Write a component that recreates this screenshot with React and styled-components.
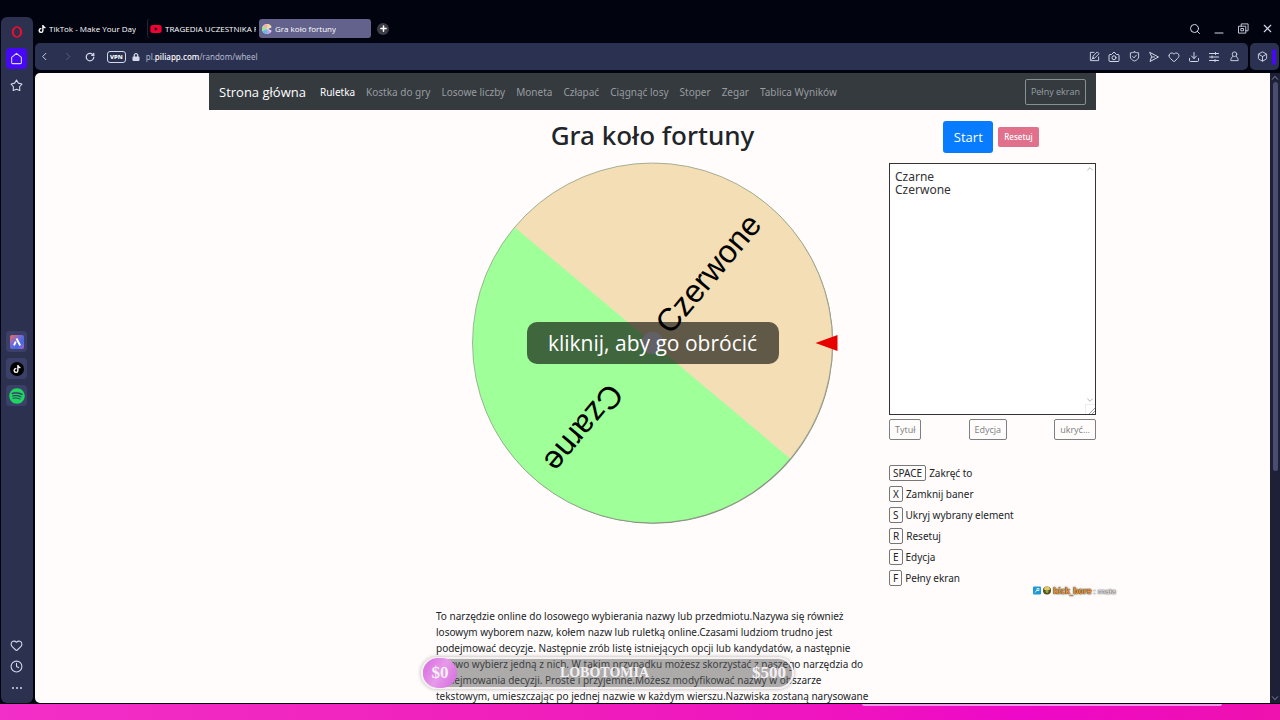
import { useState } from 'react';
import styled, { createGlobalStyle } from 'styled-components';
import { Box, Clock, Download, Heart, Plus, RotateCw, Search, X } from 'lucide-react';
import { FaLock, FaSpotify, FaTiktok, FaYoutube } from 'react-icons/fa';


const navLinks = [
  'Kostka do gry', 'Losowe liczby', 'Moneta', 'Człapać', 'Ciągnąć losy', 'Stoper', 'Zegar', 'Tablica Wyników',
];

const shortcuts = [
  { key: 'SPACE', label: 'Zakręć to' },
  { key: 'X', label: 'Zamknij baner' },
  { key: 'S', label: 'Ukryj wybrany element' },
  { key: 'R', label: 'Resetuj' },
  { key: 'E', label: 'Edycja' },
  { key: 'F', label: 'Pełny ekran' },
];

const Icon = ({ size = 12, children }) => (
  <svg width={size} height={size} viewBox='0 0 24 24' fill='none' stroke='currentColor' strokeWidth='2' strokeLinecap='round' strokeLinejoin='round'>
    {children}
  </svg>
);

const Sidebar = () => (
  <StyledSidebar>
    <SideGroup>
      <SideButton aria-label='Opera' $color='#e8102c'>
        <svg width='12' height='14' viewBox='0 0 12 14'>
          <path fillRule='evenodd' fill='currentColor' d='M6 1.300c3 0 5.200 2.600 5.200 5.700S9 12.700 6 12.700.8 10.100.8 7 3 1.300 6 1.300zM6 2.700C4.300 2.700 3 4.600 3 7S4.300 11.300 6 11.300 9 9.400 9 7 7.700 2.700 6 2.700z' />
        </svg>
      </SideButton>
      <SideButton aria-label='Strona startowa' $bg='#4708f5'>
        <Icon size={13}><path d='M3 10 12 2.500 21 10v9.500a2 2 0 0 1-2 2H5a2 2 0 0 1-2-2z' /></Icon>
      </SideButton>
      <SideButton aria-label='Zakładki'>
        <Icon size={13}><path d='M12 2 15.400 7.600 22 9.300 17.700 14.300 18.100 21.200 12 18.700 5.900 21.200 6.300 14.300 2 9.300 8.600 7.600z' /></Icon>
      </SideButton>
    </SideGroup>
    <Spacer $grow={35} />
    <SideGroup>
      <SideButton aria-label='Aria' $bg='#3a4068'>
        <svg width='14' height='14' viewBox='0 0 14 14'>
          <defs>
            <linearGradient id='aria' x1='0' y1='0' x2='1' y2='1'>
              <stop offset='0' stopColor='#f0704a' />
              <stop offset='0.4' stopColor='#7a68d8' />
              <stop offset='0.7' stopColor='#3f6ae8' />
              <stop offset='1' stopColor='#c05ad0' />
            </linearGradient>
          </defs>
          <rect width='14' height='14' rx='2' fill='url(#aria)' />
          <path d='M6.500 3.500l3.700 7M5.800 6.500 4 10.300' stroke='#fff' strokeWidth='1.900' fill='none' strokeLinejoin='round' />
        </svg>
      </SideButton>
      <SideButton aria-label='TikTok' $bg='#3a4068'>
        <RoundLogo><FaTiktok size={8} /></RoundLogo>
      </SideButton>
      <SideButton aria-label='Spotify' $bg='#3a4068' $color='#1ed760'>
        <FaSpotify size={16} />
      </SideButton>
    </SideGroup>
    <Spacer $grow={34} />
    <SideGroup $tight>
      <SideButton aria-label='Ulubione'><Heart size={13} /></SideButton>
      <SideButton aria-label='Historia'><Clock size={13} /></SideButton>
      <SideButton aria-label='Więcej'>
        <svg width='12' height='4' viewBox='0 0 12 4' fill='currentColor'>
          <circle cx='2' cy='2' r='1' /><circle cx='6' cy='2' r='1' /><circle cx='10' cy='2' r='1' />
        </svg>
      </SideButton>
    </SideGroup>
  </StyledSidebar>
);

const TabBar = () => (
  <StyledTabBar>
    <Tab><FaTiktok size={8} /><span>TikTok - Make Your Day</span></Tab>
    <Tab $divider><YoutubeMark><FaYoutube size={12} /></YoutubeMark><span>TRAGEDIA UCZESTNIKA P</span></Tab>
    <Tab $active>
      <svg width='10' height='10' viewBox='0 0 10 10'>
        <circle cx='5' cy='5' r='5' fill='#f3eef5' />
        <path d='M5 5V0a5 5 0 0 0-4 2z' fill='#f2a6c8' />
        <path d='M5 5 1 2a5 5 0 0 0-.6 5z' fill='#9ce87c' />
        <path d='M5 5 .4 7A5 5 0 0 0 5 10z' fill='#68b8f0' />
        <path d='M5 5V0a5 5 0 0 1 4 2z' fill='#f0dc80' />
        <path d='M5 5v5a5 5 0 0 0 4-2z' fill='#c89cf0' />
        <path d='M6 5l4-2v4z' fill='#6a6890' />
      </svg>
      <span>Gra koło fortuny</span>
    </Tab>
    <NewTab aria-label='Nowa karta'><Plus size={9} strokeWidth={4} /></NewTab>
    <WindowButtons>
      <IconButton aria-label='Szukaj'><Search size={12} /></IconButton>
      <IconButton aria-label='Minimalizuj'><Icon><path d='M4 20h16' /></Icon></IconButton>
      <IconButton aria-label='Przywróć'>
        <Icon size={11}><path d='M7 7V2h15v15h-5' /><path d='M2 7h15v15H2zM7 12h5v5H7z' /></Icon>
      </IconButton>
      <IconButton aria-label='Zamknij'><X size={13} /></IconButton>
    </WindowButtons>
  </StyledTabBar>
);

const AddressBar = () => (
  <BarRow>
    <Toolbar>
      <IconButton aria-label='Wstecz'><Icon size={11}><path d='m15 5-7 7 7 7' /></Icon></IconButton>
      <IconButton aria-label='Dalej' $dim><Icon size={11}><path d='m10 5 7 7-7 7' /></Icon></IconButton>
      <IconButton aria-label='Odśwież'><RotateCw size={10} strokeWidth={3} /></IconButton>
      <Address>
        <Vpn>VPN</Vpn>
        <FaLock size={8} />
        <Url href='#wheel'>pl.<b>piliapp.com</b>/random/wheel</Url>
      </Address>
      <Tools>
        <IconButton aria-label='Edytuj'>
          <Icon size={11}><path d='M11 3H3v18h18v-8M8 16l1-5 9-9 4 4-9 9zM6 18l4-4' /></Icon>
        </IconButton>
        <IconButton aria-label='Zrzut ekranu'>
          <Icon><path d='M2 9a2 2 0 0 1 2-2h3l5-5 5 5h3a2 2 0 0 1 2 2v10a2 2 0 0 1-2 2H4a2 2 0 0 1-2-2z' /><circle cx='12' cy='13.500' r='4' /></Icon>
        </IconButton>
        <IconButton aria-label='Ochrona'>
          <Icon size={11}><path d='M12 2c3 1.500 6 2 9 2v9c0 4-4 7-9 9-5-2-9-5-9-9V4c3 0 6-.5 9-2zM8 12l3 3 5-6' /></Icon>
        </IconButton>
        <IconButton aria-label='Wyślij'><Icon><path d='M4 3l17 9-17 9 3-9zM7 12h6' /></Icon></IconButton>
        <IconButton aria-label='Polub'><Heart size={12} /></IconButton>
        <IconButton aria-label='Pobrane'><Download size={12} /></IconButton>
        <IconButton aria-label='Ustawienia'><Icon><path d='M3 5h18M3 12h18M3 19h18M15 3v4M8 10v4M14 17v4' /></Icon></IconButton>
        <IconButton aria-label='Profil'><Icon size={11}><circle cx='12' cy='7' r='5' /><path d='M8 12c-3 2-4 5-4 9h16c0-4-1-7-4-9' /></Icon></IconButton>
      </Tools>
    </Toolbar>
    <Extensions>
      <IconButton aria-label='Rozszerzenia'><Box size={11} /></IconButton>
      <Marker />
    </Extensions>
  </BarRow>
);

const Wheel = () => (
  <WheelBox>
    <svg viewBox='0 0 362 362' role='img' aria-label='Koło fortuny'>
      <g transform='translate(180.500 181)'>
        <circle cx='0.700' cy='0.700' r='180' fill='#8c8c84' />
        <circle r='180' fill='#9fff99' />
        <path d='M-180 0a180 180 0 0 1 360 0z' fill='#f3deb5' transform='rotate(40)' />
        <circle r='180' fill='none' stroke='#7f8478' strokeWidth='0.600' />
        <g fontFamily='"Liberation Sans", Arial, sans-serif' fontSize='32' textAnchor='end'>
          <text transform='rotate(-50)' x='161' y='9'>Czerwone</text>
          <text transform='rotate(130)' x='161' y='9'>Czarne</text>
        </g>
        <circle r='11' fill='#f0f0ff' />
        <path d='M163 0l22-8v16z' fill='#e80000' />
      </g>
    </svg>
    <SpinButton>kliknij, aby go obrócić</SpinButton>
  </WheelBox>
);

const Options = () => {
  const [names, setNames] = useState('Czarne\nCzerwone');

  return (
    <section>
      <StartRow>
        <StartButton>Start</StartButton>
        <ResetButton>Resetuj</ResetButton>
      </StartRow>
      <ListBox>
        <textarea aria-label='Lista nazw' value={names} onChange={(e) => setNames(e.target.value)} />
        <ListScroll>
          <Icon size={8}><path d='m5 15 7-7 7 7' /></Icon>
          <Icon size={8}><path d='m5 9 7 7 7-7' /></Icon>
        </ListScroll>
        <Grip width='10' height='10' viewBox='0 0 10 10' fill='none'>
          <path d='M0 10V0h10' stroke='#ddd' />
          <path d='M4 10l6-6M7 10l3-3' stroke='#777' strokeWidth='0.700' />
        </Grip>
      </ListBox>
      <ButtonRow>
        <OutlineButton>Tytuł</OutlineButton>
        <OutlineButton>Edycja</OutlineButton>
        <OutlineButton>ukryć...</OutlineButton>
      </ButtonRow>
      <Shortcuts>
        {shortcuts.map(({ key, label }) => (
          <li key={key}><kbd>{key}</kbd>{label}</li>
        ))}
      </Shortcuts>
    </section>
  );
}

const App = () => {
  return (
    <Screen>
      <GlobalStyle />
      <Browser>
        <Sidebar />
        <Main>
          <TabBar />
          <AddressBar />
          <Viewport>
            <Page>
              <Container>
                <Navbar>
                  <Brand href='#home'>Strona główna</Brand>
                  <NavLink href='#wheel' $active>Ruletka</NavLink>
                  {navLinks.map(link => <NavLink href='#' key={link}>{link}</NavLink>)}
                  <FullScreen>Pełny ekran</FullScreen>
                </Navbar>
                <Columns>
                  <Center>
                    <h1>Gra koło fortuny</h1>
                    <Wheel />
                    <p>
                      To narzędzie online do losowego wybierania nazwy lub przedmiotu.Nazywa się również<br />
                      losowym wyborem nazw, kołem nazw lub ruletką online.Czasami ludziom trudno jest<br />
                      podejmować decyzje. Następnie zrób listę istniejących opcji lub kandydatów, a następnie<br />
                      losowo wybierz jedną z nich. W takim przypadku możesz skorzystać z naszego narzędzia do<br />
                      podejmowania decyzji. Proste i przyjemne.Możesz modyfikować nazwy w obszarze<br />
                      tekstowym, umieszczając po jednej nazwie w każdym wierszu.Nazwiska zostaną narysowane
                    </p>
                  </Center>
                  <Options />
                </Columns>
              </Container>
            </Page>
            <ScrollTrack>
              <Icon size={8}><path d='m4 16 8-9 8 9' /></Icon>
              <ScrollThumb />
              <Icon size={8}><path d='m4 8 8 9 8-9' /></Icon>
            </ScrollTrack>
          </Viewport>
        </Main>
      </Browser>
      <Strip />
      <StripGlow />
      <Goal>
        <GoalStart>$0</GoalStart>
        <GoalName>LOBOTOMIA</GoalName>
        <span>$500</span>
      </Goal>
      <Chat>
        <svg width='18' height='9' viewBox='0 0 18 9'>
          <rect width='8' height='8' y='.5' rx='1' fill='#1c9ad6' />
          <path d='M2 6.500 4 4M4 2.500h2v2H4z' stroke='#e8f6ff' strokeWidth='.9' fill='none' />
          <circle cx='14' cy='4.500' r='4' fill='#5a4a1c' />
          <path d='M11 3.500a3 3 0 0 1 6 0L14 5z' fill='#e8c860' />
          <circle cx='14' cy='5.500' r='1.500' fill='#7ab04a' />
        </svg>
        <b>kick_bore</b> : mała
      </Chat>
    </Screen>
  );
}

const GlobalStyle = createGlobalStyle`
  * {
    box-sizing: border-box;
  }

  body {
    margin: 0;
    background: #01030f;
    color: #212529;
    font-family: 'Noto Sans', 'Open Sans', sans-serif;
    font-size: 10px;
  }

  button, textarea {
    font-family: inherit;
    margin: 0;
  }

  button {
    padding: 0;
    cursor: pointer;
  }

  a {
    text-decoration: none;
  }

  svg {
    flex: none;
  }
`;

const Screen = styled.div`
  position: relative;
  display: flex;
  flex-direction: column;
  height: 100vh;
  overflow: hidden;
`;

const Browser = styled.div`
  display: flex;
  flex: 1;
  min-height: 0;
  gap: 2px;
  padding: 17px 0 1px 1px;
`;

const Strip = styled.div`
  flex: none;
  height: 16px;
  background: linear-gradient(90deg, #f22fc8, #f020bc 40%, #ee12c0 68%, #ee08c8 80%, #ee12ae);
`;

const StripGlow = styled.div`
  position: absolute;
  right: 58px;
  bottom: 14px;
  width: 360px;
  height: 2px;
  border-radius: 0 0 8px 8px;
  background: #f09be4;
`;

const StyledSidebar = styled.nav`
  display: flex;
  flex-direction: column;
  align-items: center;
  width: 32px;
  padding: 4px 1px 5px 0;
  border-radius: 6px;
  background: #2b314f;
`;

const SideGroup = styled.div`
  display: grid;
  gap: ${props => props.$tight ? 0 : '6px'};
`;

const Spacer = styled.div`
  flex: ${props => props.$grow};
`;

const SideButton = styled.button`
  display: grid;
  place-items: center;
  width: 21px;
  height: 21px;
  border: 0;
  border-radius: 4px;
  background: ${props => props.$bg || 'transparent'};
  color: ${props => props.$color || '#d4d8ea'};
`;

const RoundLogo = styled.span`
  display: grid;
  place-items: center;
  width: 14px;
  height: 14px;
  border-radius: 50%;
  background: #000;
  color: #fff;
`;

const Main = styled.div`
  display: flex;
  flex-direction: column;
  flex: 1;
  min-width: 0;
`;

const StyledTabBar = styled.div`
  display: flex;
  align-items: center;
  height: 26px;
  padding: 0 7px 3px 0;
  color: #fff;
`;

const Tab = styled.div`
  display: flex;
  align-items: center;
  gap: 3px;
  width: 112px;
  height: 19px;
  padding: 0 3px;
  border-radius: 3px;
  background: ${props => props.$active ? '#62628c' : 'transparent'};
  box-shadow: ${props => props.$divider ? 'inset 1px 0 #24263a' : 'none'};
  color: #fff;
  font-family: 'Open Sans', sans-serif;
  font-size: 8px;

  span {
    overflow: hidden;
    white-space: nowrap;
  }
`;

const YoutubeMark = styled.i`
  display: flex;
  color: #f00036;
`;

const NewTab = styled.button`
  display: grid;
  place-items: center;
  width: 12px;
  height: 12px;
  margin-left: 6px;
  border: 0;
  border-radius: 50%;
  background: #3c3c44;
  color: #fff;
`;

const WindowButtons = styled.div`
  display: flex;
  gap: 12px;
  margin-left: auto;
`;

const IconButton = styled.button`
  display: grid;
  place-items: center;
  width: 12px;
  height: 14px;
  border: 0;
  background: none;
  color: ${props => props.$dim ? '#596080' : '#d4d8ea'};
`;

const BarRow = styled.div`
  display: flex;
  gap: 2px;
  height: 27px;
  margin-bottom: 3px;
  padding-right: 1px;
`;

const Toolbar = styled.div`
  display: flex;
  flex: 1;
  align-items: center;
  gap: 11px;
  padding: 0 8px 0 3px;
  border-radius: 5px;
  background: #2b3150;
  color: #d4d8ea;
`;

const Address = styled.div`
  display: flex;
  align-items: center;
  gap: 6px;
`;

const Vpn = styled.button`
  height: 12px;
  padding: 0 2px;
  border: 1px solid #d4d8ea;
  border-radius: 3px;
  background: none;
  color: #fff;
  font-size: 6px;
  font-weight: 800;
  line-height: 10px;
`;

const Url = styled.a`
  color: #b4b9cf;
  font-size: 8px;

  b {
    color: #fff;
    font-weight: 500;
  }
`;

const Tools = styled.div`
  display: flex;
  gap: 8px;
  margin-left: auto;
`;

const Extensions = styled.div`
  display: flex;
  align-items: center;
  justify-content: space-between;
  width: 29px;
  padding: 0 3px 0 6px;
  border-radius: 5px;
  background: #2b3150;
`;

const Marker = styled.span`
  width: 4px;
  height: 16px;
  border-radius: 2px;
  background: #4708f5;
`;

const Viewport = styled.div`
  display: flex;
  flex: 1;
  min-height: 0;
`;

const Page = styled.main`
  flex: 1;
  min-width: 0;
  overflow: hidden;
  border-radius: 5px 0 0 5px;
  background: #fffcfb;
`;

const ScrollTrack = styled.div`
  display: flex;
  flex-direction: column;
  align-items: center;
  width: 10px;
  padding: 1px 0;
  background: #1d2036;
  color: #b4b9cf;

  svg:last-child {
    margin-top: auto;
  }
`;

const ScrollThumb = styled.div`
  flex: 0 1 62%;
  width: 5px;
  border-radius: 3px;
  background: #4a4c70;
`;

const Container = styled.div`
  max-width: 887px;
  margin: 0 auto;
`;

const Navbar = styled.nav`
  display: flex;
  align-items: center;
  gap: 11px;
  height: 37px;
  padding: 0 10px;
  background: #343a3e;
  white-space: nowrap;
`;

const Brand = styled.a`
  margin-right: 3px;
  color: #fff;
  font-family: 'Open Sans', sans-serif;
  font-size: 13px;
`;

const NavLink = styled.a`
  color: ${props => props.$active ? '#fff' : '#999c9e'};
  font-size: 10px;
`;

const OutlineButton = styled.button`
  height: 21px;
  padding: 0 5px;
  border: 1px solid #7b8085;
  border-radius: 2px;
  background: transparent;
  color: #7b8085;
  font-family: 'Open Sans', sans-serif;
  font-size: 9px;
`;

const FullScreen = styled(OutlineButton)`
  height: 26px;
  margin-left: auto;
  border-color: #899094;
  color: #999fa3;
`;

const Columns = styled.div`
  display: grid;
  grid-template-columns: 1fr 433px 1fr;
  column-gap: 20px;

  section {
    grid-column: 3;
  }
`;

const Center = styled.div`
  grid-column: 2;

  h1 {
    margin: 0 0 2px;
    font-size: 26px;
    font-weight: 500;
    line-height: 50px;
    text-align: center;
  }

  p {
    margin: 84px 0 0;
    font-size: 10px;
    line-height: 16px;
    white-space: nowrap;
  }
`;

const WheelBox = styled.div`
  position: relative;
  width: 362px;
  margin: 0 auto;

  svg {
    display: block;
    overflow: visible;
  }
`;

const SpinButton = styled.button`
  position: absolute;
  top: 50%;
  left: 50%;
  width: 252px;
  height: 42px;
  border: 0;
  border-radius: 10px;
  background: rgba(0, 0, 0, 0.6);
  color: #fff;
  font-family: 'Open Sans', sans-serif;
  font-size: 21px;
  transform: translate(-50%, -50%);
`;

const StartRow = styled.div`
  display: flex;
  align-items: center;
  justify-content: center;
  gap: 5px;
  height: 53px;
  padding-right: 3px;
`;

const StartButton = styled.button`
  width: 50px;
  height: 32px;
  border: 0;
  border-radius: 3px;
  background: #087cff;
  color: #fff;
  font-family: 'Open Sans', sans-serif;
  font-size: 13px;
`;

const ResetButton = styled.button`
  height: 20px;
  padding: 0 6px;
  border: 0;
  border-radius: 2px;
  background: #e0708c;
  color: #fff;
  font-size: 8px;
  font-weight: 500;
`;

const ListBox = styled.div`
  position: relative;

  textarea {
    display: block;
    width: 100%;
    height: 252px;
    padding: 6px 5px;
    border: 1px solid #333;
    background: #fff;
    color: #333;
    font-size: 12px;
    line-height: 13px;
    resize: none;
  }
`;

const ListScroll = styled.div`
  position: absolute;
  top: 2px;
  right: 2px;
  bottom: 11px;
  display: flex;
  flex-direction: column;
  justify-content: space-between;
  color: #888;
`;

const Grip = styled.svg`
  position: absolute;
  right: 1px;
  bottom: 1px;
`;

const ButtonRow = styled.div`
  display: flex;
  justify-content: space-between;
  margin-top: 4px;
`;

const Shortcuts = styled.ul`
  display: grid;
  gap: 5px;
  margin: 25px 0 0;
  padding: 0;
  list-style: none;

  li {
    display: flex;
    align-items: center;
    gap: 3px;
    height: 16px;
    font-size: 10px;
  }

  kbd {
    height: 16px;
    padding: 0 3px;
    border: 1px solid #777;
    border-radius: 2px;
    font-family: inherit;
    line-height: 14px;
  }
`;

const Goal = styled.div`
  position: absolute;
  bottom: 31px;
  left: 421px;
  display: flex;
  align-items: center;
  justify-content: space-between;
  width: 373px;
  height: 32px;
  padding-right: 6px;
  border: 2px solid #f4f0f2;
  border-radius: 16px;
  background: rgba(90, 90, 90, 0.5);
  box-shadow: 0 0 4px rgba(0, 0, 0, 0.3);
  color: #f4f0f2;
  font: 700 17px 'Liberation Serif', serif;
`;

const GoalStart = styled.span`
  display: grid;
  place-items: center;
  width: 34px;
  height: 30px;
  border-radius: 15px;
  background: linear-gradient(120deg, #d868e0, #e79aea 50%, #d268dc);
`;

const GoalName = styled.span`
  font-size: 14px;
`;

const Chat = styled.div`
  position: absolute;
  top: 584px;
  right: 164px;
  display: flex;
  align-items: center;
  gap: 2px;
  color: #fff;
  font-family: 'Open Sans', sans-serif;
  font-size: 8px;
  line-height: 13px;
  text-shadow: 0 0 1px #444, 0 0 1px #444, 0 0 2px #444;

  b {
    color: #f0962c;
  }
`;

export default App;
